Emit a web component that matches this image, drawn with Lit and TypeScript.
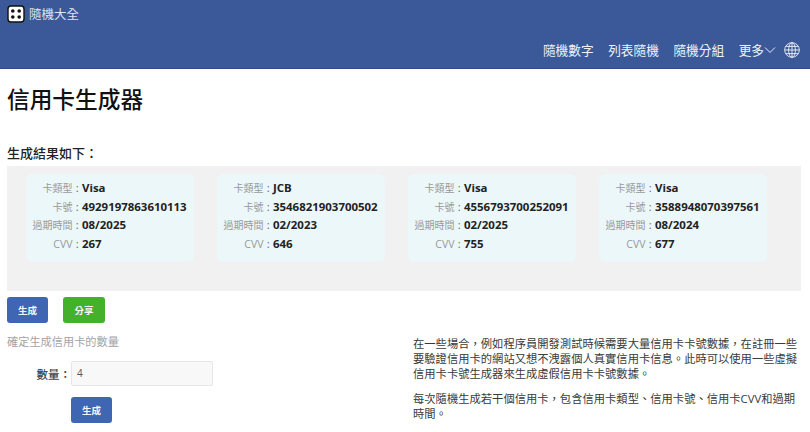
import { LitElement, html, css } from "lit";
import { customElement } from "lit/decorators.js";

const cards = [
  ["Visa", "4929197863610113", "08/2025", "267"],
  ["JCB", "3546821903700502", "02/2023", "646"],
  ["Visa", "4556793700252091", "02/2025", "755"],
  ["Visa", "3588948070397561", "08/2024", "677"],
];

@customElement("app-root")
export class AppRoot extends LitElement {
  static styles = css`
    :host {
      display: block;
      width: 810px;
      height: 432px;
      overflow: hidden;
      background: #fff;
      font-family: "Open Sans", "Noto Sans CJK TC", sans-serif;
      color: #333;
    }
    .header {
      height: 68px;
      background: #3b5998;
      border-bottom: 1px solid #2f4d8c;
      display: flex;
      flex-direction: column;
      justify-content: space-between;
      color: #e8edf6;
    }
    .brand {
      display: flex;
      align-items: flex-start;
      gap: 4px;
      padding: 5px 0 0 7px;
      font-size: 12.5px;
      line-height: 18px;
      color: #dfe5f1;
    }
    .brand div { margin-top: 1px; }
    .nav {
      display: flex;
      justify-content: flex-end;
      align-items: center;
      height: 37px;
      padding-right: 10px;
      font-size: 12.7px;
      color: #eef2f9;
    }
    .nav span { margin-right: 14.5px; }
    .nav .more { margin-right: 0; display: flex; align-items: center; }
    .nav svg.globe { margin-left: 8px; }
    .main { padding: 0 9px 0 7px; }
    h1 {
      margin: 0;
      padding-top: 18px;
      font-size: 22.7px;
      line-height: 26px;
      font-weight: 500;
      color: #111;
    }
    h2 {
      margin: 0;
      padding-top: 31px;
      font-size: 13px;
      line-height: 18px;
      font-weight: 500;
      color: #222;
    }
    .result {
      margin-top: 4px;
      height: 125px;
      box-sizing: border-box;
      background: #f1f1f1;
      padding: 8px 19px;
      display: flex;
      gap: 23px;
    }
    .card {
      width: 168px;
      height: 88px;
      box-sizing: border-box;
      padding-top: 5px;
      background: #ebf7f9;
      border-radius: 6px;
    }
    .row {
      display: flex;
      height: 18.6px;
      line-height: 18.6px;
      font-size: 10px;
      white-space: nowrap;
    }
    .lbl {
      width: 46.5px;
      text-align: right;
      color: #999;
      flex: none;
    }
    .cvv { font-size: 10.5px; }
    .colon { width: 9.5px; flex: none; text-align: center; color: #666; font-size: 11px; }
    .val { font-weight: 700; color: #222; font-size: 11.45px; }
    .btn {
      display: inline-flex;
      align-items: center;
      justify-content: center;
      height: 26px;
      width: 41px;
      border-radius: 3px;
      background: #3f66b2;
      color: #f4f6fb;
      font-size: 9.5px;
      font-weight: 700;
    }
    .btn.green { background: #45b02b; width: 42px; }
    .actions {
      display: flex;
      gap: 15px;
      margin-top: 6px;
    }
    .lower {
      display: flex;
      margin-top: 10px;
    }
    .left { width: 406px; flex: none; }
    .hint { font-size: 11.2px; line-height: 18px; color: #a3a3a3; }
    .qty {
      display: flex;
      align-items: center;
      margin-top: 10px;
    }
    .qty label {
      width: 64px;
      text-align: right;
      font-size: 11.5px;
      color: #444;
      font-weight: 500;
    }
    .input {
      width: 142px;
      height: 25px;
      box-sizing: border-box;
      background: #f8f8f8;
      border: 1px solid #e6e6e6;
      border-radius: 2px;
      font-size: 10px;
      line-height: 23px;
      padding-left: 5px;
      color: #555;
    }
    .submit { margin: 11px 0 0 64px; }
    .desc { font-size: 11.3px; line-height: 15px; color: #3a3a3a; width: 388px; padding-top: 3px; }
    .desc p { margin: 0 0 10px; }
  `;

  render() {
    return html`
      <div class="header">
        <div class="brand">
          <svg width="18" height="18" viewBox="0 0 18 18">
            <rect x="1" y="1" width="16" height="16" rx="3" fill="#fff" stroke="#111" stroke-width="1.4"/>
            <circle cx="5.8" cy="6" r="1.8" fill="#111"/><circle cx="12.2" cy="6" r="1.8" fill="#111"/>
            <circle cx="5.8" cy="12" r="1.8" fill="#111"/><circle cx="12.2" cy="12" r="1.8" fill="#111"/>
          </svg>
          <div>隨機大全</div>
        </div>
        <div class="nav">
          <span>隨機數字</span><span>列表隨機</span><span>隨機分組</span>
          <div class="more">更多<svg width="12" height="8" viewBox="0 0 12 8"><path d="M1 1.5 6 6.5 11 1.5" fill="none" stroke="#e8edf6" stroke-width="1"/></svg></div>
          <svg class="globe" width="16" height="16" viewBox="0 0 16 16" fill="none" stroke="#eef2f9" stroke-width="0.9">
            <circle cx="8" cy="8" r="7.3"/><ellipse cx="8" cy="8" rx="3.4" ry="7.3"/>
            <path d="M8 .7v14.6M.7 8h14.6M1.8 4.4h12.4M1.8 11.6h12.4"/>
          </svg>
        </div>
      </div>
      <div class="main">
        <h1>信用卡生成器</h1>
        <h2>生成結果如下：</h2>
        <div class="result">
          ${cards.map(
            (c) => html`<div class="card">
              ${["卡類型", "卡號", "過期時間", "CVV"].map(
                (l, i) => html`<div class="row"><div class="lbl ${i === 3 ? "cvv" : ""}">${l}</div><div class="colon">:</div><div class="val">${c[i]}</div></div>`
              )}
            </div>`
          )}
        </div>
        <div class="actions"><div class="btn">生成</div><div class="btn green">分享</div></div>
        <div class="lower">
          <div class="left">
            <div class="hint">確定生成信用卡的數量</div>
            <div class="qty"><label>數量：</label><div class="input">4</div></div>
            <div class="btn submit">生成</div>
          </div>
          <div class="desc">
            <p>在一些場合，例如程序員開發測試時候需要大量信用卡卡號數據，在註冊一些要驗證信用卡的網站又想不洩露個人真實信用卡信息。此時可以使用一些虛擬信用卡卡號生成器來生成虛假信用卡卡號數據。</p>
            <p>每次隨機生成若干個信用卡，包含信用卡類型、信用卡號、信用卡CVV和過期時間。</p>
          </div>
        </div>
      </div>
    `;
  }
}
